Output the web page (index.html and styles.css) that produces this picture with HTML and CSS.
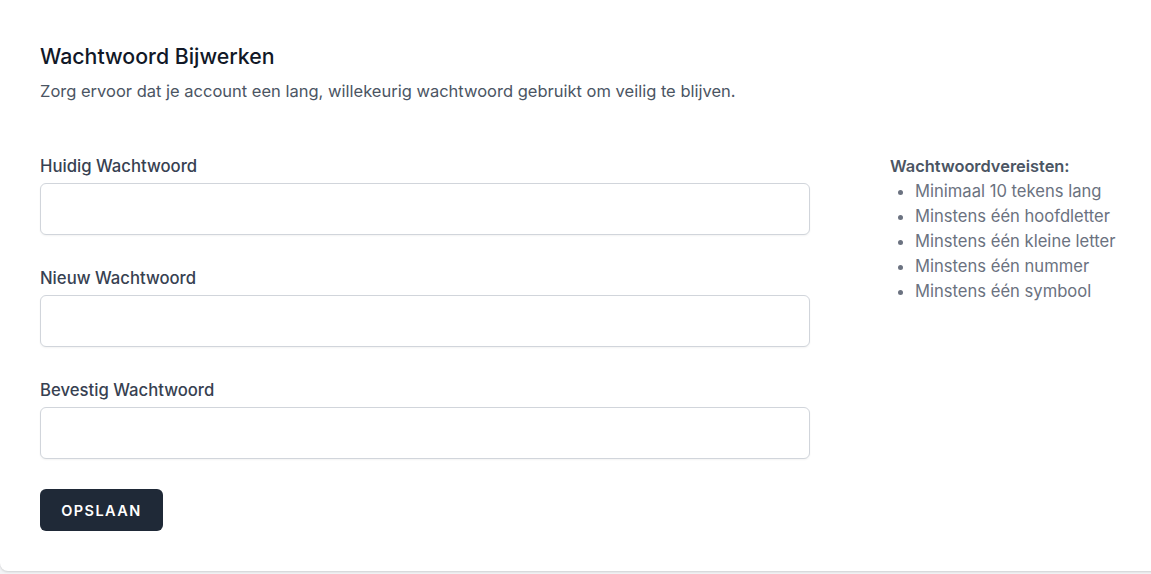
FILE: index.html
```html
<!DOCTYPE html>
<html lang="nl">
<head>
<meta charset="utf-8">
<title>Wachtwoord Bijwerken</title>
<link rel="stylesheet" href="styles.css">
</head>
<body>
<section class="card">
  <header class="card-head">
    <h2 class="title">Wachtwoord Bijwerken</h2>
    <p class="desc">Zorg ervoor dat je account een lang, willekeurig wachtwoord gebruikt om veilig te blijven.</p>
  </header>
  <div class="content">
    <form class="form">
      <div class="field">
        <label class="label" for="cur">Huidig Wachtwoord</label>
        <input class="input" id="cur" type="password">
      </div>
      <div class="field">
        <label class="label" for="new">Nieuw Wachtwoord</label>
        <input class="input" id="new" type="password">
      </div>
      <div class="field">
        <label class="label" for="conf">Bevestig Wachtwoord</label>
        <input class="input" id="conf" type="password">
      </div>
      <div class="actions">
        <button class="btn" type="button">Opslaan</button>
      </div>
    </form>
    <aside class="reqs">
      <p class="reqs-title">Wachtwoordvereisten:</p>
      <ul class="reqs-list">
        <li>Minimaal 10 tekens lang</li>
        <li>Minstens één hoofdletter</li>
        <li>Minstens één kleine letter</li>
        <li>Minstens één nummer</li>
        <li>Minstens één symbool</li>
      </ul>
    </aside>
  </div>
</section>
</body>
</html>
```
FILE: styles.css
```css
* { box-sizing: border-box; }
html, body { margin: 0; padding: 0; }
body {
  background: #f3f4f6;
  font-family: "Inter", "Noto Sans", sans-serif;
  overflow: hidden;
  height: 574px;
}
.card {
  background: #ffffff;
  width: calc(100% + 12px);
  height: 571px;
  border-radius: 0 0 8px 8px;
  box-shadow: 0 1px 3px rgba(0,0,0,0.1), 0 1px 2px rgba(0,0,0,0.06);
  padding: 41px 40px 0 40px;
}
.title {
  margin: 0;
  font-size: 21.3px;
  font-weight: 500;
  color: #111827;
  line-height: 30px;
}
.desc {
  margin: 8px 0 0 0;
  font-size: 16.5px;
  color: #4b5563;
  line-height: 24px;
}
.content {
  display: flex;
  margin-top: 51px;
}
.form {
  width: 770px;
  display: flex;
  flex-direction: column;
}
.field {
  display: flex;
  flex-direction: column;
  margin-bottom: 31px;
}
.label {
  font-size: 16.7px;
  font-weight: 450;
  color: #374151;
  line-height: 24px;
  margin-bottom: 5px;
}
.input {
  height: 52px;
  border: 1px solid #d1d5db;
  border-radius: 6px;
  box-shadow: 0 1px 2px rgba(0,0,0,0.05);
  background: #fff;
  font: inherit;
  padding: 0 12px;
}
.actions { margin-top: -1px; }
.btn {
  height: 42px;
  width: 123px;
  background: #1f2937;
  color: #fff;
  border: none;
  border-radius: 6px;
  font-family: inherit;
  font-size: 14.5px;
  font-weight: 600;
  letter-spacing: 0.1em;
  text-transform: uppercase;
}
.reqs {
  margin-left: 80px;
}
.reqs-title {
  margin: 0;
  font-size: 16.4px;
  font-weight: 600;
  color: #4b5563;
  line-height: 24px;
}
.reqs-list {
  margin: 1px 0 0 0;
  padding-left: 25px;
  color: #6b7280;
  font-size: 16.6px;
  line-height: 25px;
}
.reqs-list li::marker { color: #6b7280; }
```
